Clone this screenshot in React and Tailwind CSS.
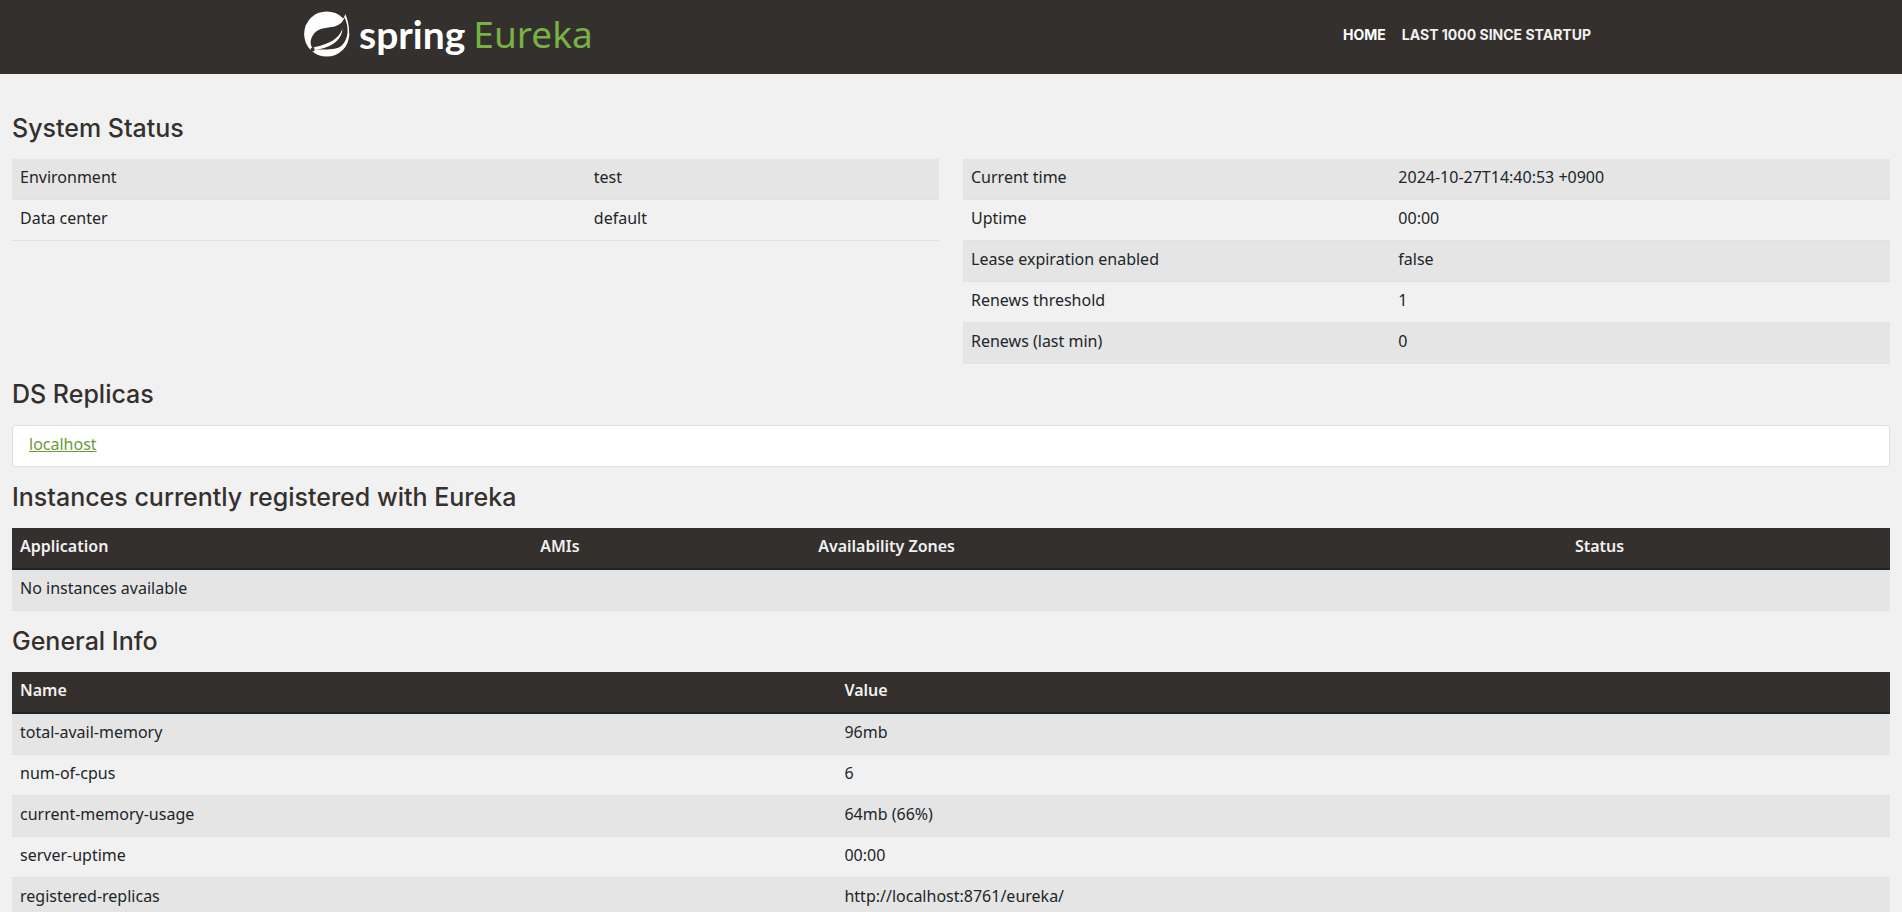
const environment = [
  ["Environment", "test"],
  ["Data center", "default"],
];

const status = [
  ["Current time", "2024-10-27T14:40:53 +0900"],
  ["Uptime", "00:00"],
  ["Lease expiration enabled", "false"],
  ["Renews threshold", "1"],
  ["Renews (last min)", "0"],
];

const generalInfo = [
  ["total-avail-memory", "96mb"],
  ["num-of-cpus", "6"],
  ["current-memory-usage", "64mb (66%)"],
  ["server-uptime", "00:00"],
  ["registered-replicas", "http://localhost:8761/eureka/"],
];

const cell = "px-2 pt-1.5 pb-2.5 text-left";

function Logo() {
  return (
    <a href="#" className="flex items-center pb-0.5" aria-label="Spring Eureka">
      <svg viewBox="0 0 48 48" className="size-12" aria-hidden="true">
        <circle cx="23.7" cy="24" r="22.6" fill="#fff" />
        {/* leaf tip that sticks out of the disc */}
        <path d="M38 11C40 9 41.500 7 42.400 4C44.500 9 46 15 46.200 22L38 20Z" fill="#fff" />
        <path
          d="M41.600 7.500C40 11.500 37.500 14.500 33 16C27 18 18 17 12.500 22C7.500 27 6.500 33 9 37.500L13 40C22 40.300 33 40.500 38.500 35.800C46 29 46 17 41.600 7.500Z"
          fill="#34302d"
        />
        <path d="M39.500 18.500C36.500 26.500 30 33.500 11 37.200L10.500 39.800C18 39.500 25 37.500 30 34C35.500 30 39 25.500 39.500 18.500Z" fill="#fff" />
        <path d="M12 39.300C22 40 31 39.300 37 37.500C32 40.500 22 41 12 40.800Z" fill="#fff" />
        <circle cx="9.600" cy="39.400" r="2" fill="#34302d" />
      </svg>
      <span className="ml-2 font-['Lato'] text-[39px] leading-[48px] font-bold text-white">spring</span>
      <span className="ml-2 font-['Noto_Sans'] text-[37px] leading-[48px] text-[#78b144]">Eureka</span>
    </a>
  );
}

function Heading({ children }) {
  return (
    <h1 className="mb-4 font-['Inter'] text-[25px] leading-[29px] font-medium text-[#34302d]">{children}</h1>
  );
}

function Row({ children }) {
  return <tr className="border-b border-[#dee2e6] odd:bg-[#e5e5e5]">{children}</tr>;
}

function PairTable({ rows, labelWidth, head }) {
  return (
    <table className="mb-4 w-full table-fixed">
      <colgroup>
        <col className={labelWidth} />
        <col />
      </colgroup>
      {head && (
        <thead className="border-b-2 border-[#212529] bg-[#34302d] text-[#f1f1f1]">
          <tr>
            {head.map((h) => (
              <th key={h} className={`${cell} font-semibold`}>{h}</th>
            ))}
          </tr>
        </thead>
      )}
      <tbody>
        {rows.map(([label, value]) => (
          <Row key={label}>
            <td className={cell}>{label}</td>
            <td className={cell}>{value}</td>
          </Row>
        ))}
      </tbody>
    </table>
  );
}

export default function App() {
  return (
    <div className="min-h-screen bg-[#f1f1f1] font-['Noto_Sans',sans-serif] text-base text-[#212529]">
      <nav className="bg-[#34302d]">
        <div className="mx-auto flex h-[74px] max-w-[1320px] items-center justify-between px-3 pb-1">
          <Logo />
          <ul className="flex gap-4 px-2 font-['Inter'] text-sm font-bold uppercase">
            <li><a href="#" className="text-white">Home</a></li>
            <li><a href="#lastn" className="text-[#f1f1f1]">Last 1000 since startup</a></li>
          </ul>
        </div>
      </nav>

      <main className="px-3 pt-10">
        <Heading>System Status</Heading>
        <div className="grid grid-cols-2 items-start gap-6">
          <PairTable rows={environment} labelWidth="w-[61.9%]" />
          <PairTable rows={status} labelWidth="w-[46.1%]" />
        </div>

        <Heading>DS Replicas</Heading>
        <ul className="mb-4 rounded border border-[#dfdfdf] bg-white">
          <li className="px-4 pt-1.5 pb-2.5">
            <a href="#" className="text-[#6a9a3a] underline">localhost</a>
          </li>
        </ul>

        <Heading>Instances currently registered with Eureka</Heading>
        <table className="mb-4 w-full table-fixed">
          <thead className="border-b-2 border-[#212529] bg-[#34302d] text-[#f1f1f1]">
            <tr>
              <th className={`${cell} w-[27.7%] font-semibold`}>Application</th>
              <th className={`${cell} w-[14.8%] font-semibold`}>AMIs</th>
              <th className={`${cell} w-[40.3%] font-semibold`}>Availability Zones</th>
              <th className={`${cell} font-semibold`}>Status</th>
            </tr>
          </thead>
          <tbody>
            <Row>
              <td colSpan={4} className={cell}>No instances available</td>
            </Row>
          </tbody>
        </table>

        <Heading>General Info</Heading>
        <PairTable rows={generalInfo} labelWidth="w-[43.9%]" head={["Name", "Value"]} />
      </main>
    </div>
  );
}
